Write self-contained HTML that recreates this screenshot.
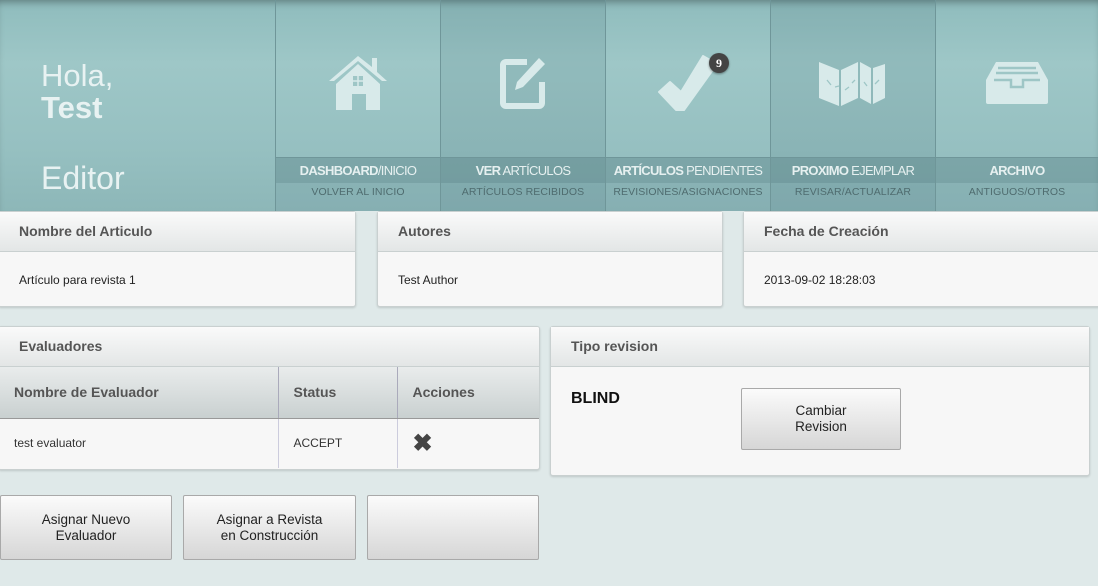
<!DOCTYPE html>
<html><head><meta charset="utf-8"><style>
*{box-sizing:border-box;margin:0;padding:0}
body{width:1098px;height:586px;background:#dfe9e9;font-family:"Liberation Sans",Arial,sans-serif;position:relative;overflow:hidden}
.hdr{position:absolute;left:0;top:0;width:1098px;height:211px;background:linear-gradient(#8fbcbd,#9ec7c7 30%,#96c0c1 70%,#8db7b8);box-shadow:inset 0 6px 8px -4px rgba(0,0,0,.35)}
.hello{position:absolute;left:41px;top:60px;color:#e8f2f2;font-size:31px;line-height:32px}
.hello b{display:block}
.role{position:absolute;left:41px;top:160px;color:#e8f2f2;font-size:32px}
.tile{position:absolute;top:0;height:211px;border-left:1px solid #6f9699}
.tile .lab{position:absolute;left:0;right:0;top:157px;height:26px;background:rgba(80,120,125,.35);border-top:1px solid #6f9699;color:#e6f0f0;font-size:13px;text-align:center;line-height:26px;letter-spacing:-.7px}
.tile .sub{position:absolute;left:0;right:0;top:183px;height:28px;background:rgba(120,160,165,.3);color:#4f6c6f;font-size:10.5px;text-align:center;line-height:19px;letter-spacing:.1px}
.tile svg{position:absolute;left:50%;top:54px;transform:translateX(-50%)}
.dk{background:rgba(60,100,105,.12)}
.card{position:absolute;background:#f7f7f7;border:1px solid #c9d0d0;border-radius:3px;box-shadow:0 1px 2px rgba(0,0,0,.15)}
.ch{height:40px;background:linear-gradient(#fafafa,#e3e6e6);border-bottom:1px solid #c9d0d0;color:#555;font-weight:bold;font-size:14px;line-height:38px;padding-left:20px}
.cb{font-size:12px;color:#222;padding-left:20px;line-height:56px}
.btn{position:absolute;background:linear-gradient(#fbfbfb,#d6d6d6);border:1px solid #a9a9a9;border-radius:2px;font-size:13.5px;color:#222;text-align:center;display:flex;align-items:center;justify-content:center;line-height:16px}
table{border-collapse:collapse;width:100%}
th{height:51px;background:linear-gradient(#e9ecec,#c9d0d0);color:#555;font-size:14px;text-align:left;padding-left:15px;border-right:1px solid #aab;border-bottom:1px solid #999}
td{height:50px;font-size:12px;color:#333;padding-left:15px;border-right:1px solid #ccd}
</style></head><body>
<div class="hdr">
<div class="hello">Hola,<b>Test</b></div>
<div class="role">Editor</div>
<div class="tile" style="left:275px;width:165px">
<svg width="60" height="60" viewBox="0 0 60 60"><path d="M30 2 L1 27 h5 L30 7 L54 27 h5 L49 18 V4 h-5 V13Z M8 30 L30 10 L52 30 V56 H38 V40 H24 V56 H8Z" fill="#d8eaea"/><rect x="25" y="22" width="10" height="10" fill="#9ec6c6"/><path d="M25 27h10M30 22v10" stroke="#d8eaea" stroke-width="1.5"/></svg>
<div class="lab"><b>DASHBOARD</b>/INICIO</div><div class="sub">VOLVER AL INICIO</div></div>
<div class="tile dk" style="left:440px;width:165px">
<svg width="60" height="60" viewBox="0 0 60 60"><path d="M34 8 H13 a3 3 0 0 0 -3 3 V49 a3 3 0 0 0 3 3 H46 a3 3 0 0 0 3 -3 V28" fill="none" stroke="#d8eaea" stroke-width="6"/><path d="M46 4 l6 6 L30 33 l-8 3 l2 -8Z" fill="#d8eaea"/></svg>
<div class="lab"><b>VER</b> ARTÍCULOS</div><div class="sub">ARTÍCULOS RECIBIDOS</div></div>
<div class="tile" style="left:605px;width:165px">
<svg width="60" height="60" viewBox="0 0 60 60"><path d="M1 38 l11 -10 l11 10 L45 2 l14 8 L26 56 H18Z" fill="#d8eaea" stroke="#d8eaea" stroke-width="2" stroke-linejoin="round"/></svg>
<div style="position:absolute;left:103px;top:53px;width:20px;height:20px;border-radius:50%;background:#444;color:#fff;font:bold 12px 'Liberation Serif',serif;text-align:center;line-height:20px;box-shadow:0 1px 2px rgba(0,0,0,.4)">9</div>
<div class="lab"><b>ARTÍCULOS</b> PENDIENTES</div><div class="sub">REVISIONES/ASIGNACIONES</div></div>
<div class="tile dk" style="left:770px;width:165px">
<svg width="68" height="46" viewBox="0 0 68 46" style="top:60px"><path d="M0 2 L20 10 V46 L0 38Z M22 10 L39 2 V38 L22 46Z M41 2 L52 8 V44 L41 38Z M54 8 L66 4 V38 L54 44Z" fill="#d8eaea"/><path d="M8 20l4 5m4 2l4 -1M26 30l4 -3m3 -4l3 -3M45 22l3 4M56 24l4 -4" stroke="#9ec6c6" stroke-width="1.3"/></svg>
<div class="lab"><b>PROXIMO</b> EJEMPLAR</div><div class="sub">REVISAR/ACTUALIZAR</div></div>
<div class="tile" style="left:935px;width:163px">
<svg width="66" height="46" viewBox="0 0 66 46" style="top:60px"><path d="M12 2 H54 L64 20 V42 a2 2 0 0 1 -2 2 H4 a2 2 0 0 1 -2 -2 V20Z" fill="#d8eaea"/><path d="M10 20 H27 V27 H39 V20 H56 M14 8H52 M12 13H54" stroke="#9ec6c6" stroke-width="2.5" fill="none"/></svg>
<div class="lab"><b>ARCHIVO</b></div><div class="sub">ANTIGUOS/OTROS</div></div>
</div>

<div class="card" style="left:-2px;top:211px;width:358px;height:96px"><div class="ch">Nombre del Articulo</div><div class="cb">Artículo para revista 1</div></div>
<div class="card" style="left:377px;top:211px;width:346px;height:96px"><div class="ch">Autores</div><div class="cb">Test Author</div></div>
<div class="card" style="left:743px;top:211px;width:358px;height:96px"><div class="ch">Fecha de Creación</div><div class="cb">2013-09-02 18:28:03</div></div>

<div class="card" style="left:-2px;top:326px;width:542px;height:144px;overflow:hidden"><div class="ch">Evaluadores</div>
<table><tr><th style="width:279px">Nombre de Evaluador</th><th style="width:119px">Status</th><th style="border-right:0">Acciones</th></tr>
<tr><td>test evaluator</td><td>ACCEPT</td><td style="border-right:0;font-size:24px;font-weight:bold;color:#444">✖</td></tr></table></div>

<div class="card" style="left:550px;top:326px;width:540px;height:150px"><div class="ch">Tipo revision</div>
<div style="position:absolute;left:20px;top:63px;font-weight:bold;font-size:16px;color:#111">BLIND</div></div>
<div class="btn" style="left:741px;top:388px;width:160px;height:62px">Cambiar<br>Revision</div>

<div class="btn" style="left:0;top:495px;width:172px;height:65px">Asignar Nuevo<br>Evaluador</div>
<div class="btn" style="left:183px;top:495px;width:173px;height:65px">Asignar a Revista<br>en Construcción</div>
<div class="btn" style="left:367px;top:495px;width:172px;height:65px"></div>
</body></html>
